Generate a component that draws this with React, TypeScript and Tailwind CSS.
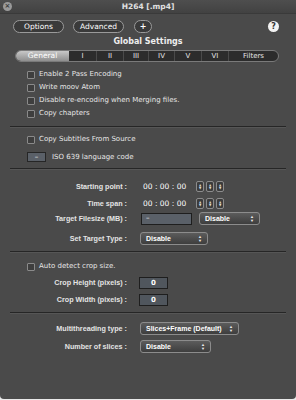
import React from "react";

const Check = ({ label }: { label: string }) => (
  <div className="flex items-center h-[13px] pl-[27px]">
    <div className="w-[8px] h-[8px] border border-[#8a8a8a] bg-[#3e3e3e] rounded-[1px]" />
    <span className="ml-[4px] text-[#e6e6e6]">{label}</span>
  </div>
);

const Sep = () => <div className="mx-[10px] h-px bg-[#262626] border-b border-[#565656] box-content" />;

const Label = ({ children }: { children: React.ReactNode }) => (
  <div className="w-[127px] text-right font-bold text-[#e4e4e4] shrink-0 text-[7.2px] whitespace-nowrap font-['Liberation_Sans',sans-serif]">
    {children}
  </div>
);

const Dropdown = ({ text, w }: { text: string; w: number }) => (
  <div
    className="h-[13px] rounded-[3px] border border-[#8c8c8c] bg-gradient-to-b from-[#5c5c5c] to-[#3e3e3e] flex items-center justify-between pl-[5px] pr-[5px] text-white font-bold whitespace-nowrap text-[7px] font-['Liberation_Sans',sans-serif]"
    style={{ width: w }}
  >
    <span>{text}</span>
    <span className="flex flex-col items-center leading-none text-[4px] text-[#eee]">
      <span>▲</span>
      <span>▼</span>
    </span>
  </div>
);

const Stepper = () => (
  <div className="w-[8px] h-[11px] rounded-[2px] border border-[#8c8c8c] bg-[#3c3c3c] flex flex-col items-center justify-center leading-none text-[3px] text-[#ddd]">
    <span>▲</span>
    <span>▼</span>
  </div>
);

const Steppers = () => (
  <div className="flex gap-[2px] ml-[10px]">
    <Stepper />
    <Stepper />
    <Stepper />
  </div>
);

const tabs: [string, number][] = [
  ["I", 27],
  ["II", 27],
  ["III", 25],
  ["IV", 26],
  ["V", 27],
  ["VI", 27],
  ["Filters", 52],
];

export default function App() {
  return (
    <div className="w-[296px] h-[400px] bg-[#e9e9e9]">
      <div className="w-[296px] h-[399px] bg-[#4a4a4a] rounded-b-[4px] font-['DejaVu_Sans',sans-serif] text-[7px] leading-none text-[#e6e6e6] overflow-hidden">
        {/* title bar */}
        <div className="relative h-[14px] flex items-center justify-center bg-gradient-to-b from-[#4e4e4e] to-[#424242] border-b border-[#3a3a3a]">
          <div className="absolute left-[3px] top-[2px] w-[9px] h-[9px] rounded-full bg-[#9a9a9a] flex items-center justify-center text-[#3a3a3a] text-[7px] font-bold">
            ×
          </div>
          <span className="font-bold text-[#e0e0e0] text-[7.5px]">H264 [.mp4]</span>
        </div>

        {/* buttons row */}
        <div className="flex items-center h-[13px] mt-[6px] pl-[13px] pr-[17px]">
          <div className="w-[51px] h-[13px] rounded-full border border-[#9a9a9a] bg-[#3a3a3a] flex items-center justify-center text-white text-[7.5px]">
            Options
          </div>
          <div className="ml-[9px] w-[51px] h-[13px] rounded-full border border-[#9a9a9a] bg-[#3a3a3a] flex items-center justify-center text-white text-[7.5px]">
            Advanced
          </div>
          <div className="ml-[10px] w-[18px] h-[13px] rounded-full border border-[#9a9a9a] bg-[#3a3a3a] flex items-center justify-center text-white text-[8px] font-bold">
            +
          </div>
          <div className="ml-auto w-[11px] h-[11px] rounded-full bg-[#f2f2f2] flex items-center justify-center text-[#333] text-[8px] font-bold">
            ?
          </div>
        </div>

        {/* global settings */}
        <div className="mt-[5px] text-center font-bold text-[8px] text-[#eeeeee]">Global Settings</div>

        {/* tabs */}
        <div className="mt-[4px] ml-[15px] w-[264px] h-[12px] rounded-full border border-[#7a7a7a] bg-[#2c2c2c] flex overflow-hidden">
          <div className="w-[53px] h-full bg-gradient-to-b from-[#c8c8c8] to-[#8e8e8e] flex items-center justify-center text-white text-[7.5px]">
            General
          </div>
          {tabs.map(([t, w], i) => (
            <div
              key={t}
              className={`h-full flex items-center justify-center text-[#e6e6e6] text-[7px] ${i > 0 ? "border-l border-[#4a4a4a]" : ""}`}
              style={{ width: i === 6 ? w - 2 : w }}
            >
              {t}
            </div>
          ))}
        </div>

        {/* checkboxes */}
        <div className="mt-[6px] flex flex-col">
          <Check label="Enable 2 Pass Encoding" />
          <Check label="Write moov Atom" />
          <Check label="Disable re-encoding when Merging files." />
          <Check label="Copy chapters" />
        </div>

        <div className="mt-[6px]">
          <Sep />
        </div>

        <div className="mt-[5px]">
          <Check label="Copy Subtitles From Source" />
        </div>
        <div className="mt-[6px] flex items-center pl-[27px]">
          <div className="w-[19px] h-[10px] border border-[#262626] bg-[#5a6068] flex items-center justify-center text-white">
            –
          </div>
          <span className="ml-[6px]">ISO 639 language code</span>
        </div>

        <div className="mt-[6px]">
          <Sep />
        </div>

        {/* time */}
        <div className="mt-[11px] flex items-center h-[11px]">
          <Label>Starting point :</Label>
          <span className="ml-[16px] text-white text-[7.5px]">00 : 00 : 00</span>
          <Steppers />
        </div>
        <div className="mt-[6px] flex items-center h-[11px]">
          <Label>Time span :</Label>
          <span className="ml-[16px] text-white text-[7.5px]">00 : 00 : 00</span>
          <Steppers />
        </div>
        <div className="mt-[3px] flex items-center h-[13px]">
          <Label>Target Filesize (MB) :</Label>
          <div className="ml-[14px] w-[51px] h-[12px] border border-[#1e1e1e] bg-[#5a6068] flex items-center pl-[4px] text-white">
            –
          </div>
          <div className="ml-[7px]">
            <Dropdown text="Disable" w={61} />
          </div>
        </div>
        <div className="mt-[7px] flex items-center h-[13px]">
          <Label>Set Target Type :</Label>
          <div className="ml-[13px]">
            <Dropdown text="Disable" w={68} />
          </div>
        </div>

        <div className="mt-[6px]">
          <Sep />
        </div>

        {/* crop */}
        <div className="mt-[7px]">
          <Check label="Auto detect crop size." />
        </div>
        <div className="mt-[4px] flex items-center h-[12px]">
          <Label>Crop Height (pixels) :</Label>
          <div className="ml-[12px] w-[29px] h-[12px] border border-[#1e1e1e] bg-[#50565d] flex items-center justify-center text-white font-bold">
            0
          </div>
        </div>
        <div className="mt-[5px] flex items-center h-[12px]">
          <Label>Crop Width (pixels) :</Label>
          <div className="ml-[12px] w-[29px] h-[12px] border border-[#1e1e1e] bg-[#50565d] flex items-center justify-center text-white font-bold">
            0
          </div>
        </div>

        <div className="mt-[6px]">
          <Sep />
        </div>

        {/* threading */}
        <div className="mt-[8px] flex items-center h-[13px]">
          <Label>Multithreading type :</Label>
          <div className="ml-[13px]">
            <Dropdown text="Slices+Frame (Default)" w={99} />
          </div>
        </div>
        <div className="mt-[5px] flex items-center h-[13px]">
          <Label>Number of slices :</Label>
          <div className="ml-[13px]">
            <Dropdown text="Disable" w={71} />
          </div>
        </div>
      </div>
    </div>
  );
}
